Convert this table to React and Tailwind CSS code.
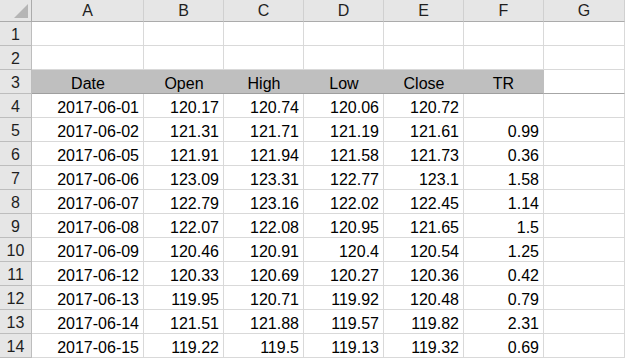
import React from "react";

const cols = ["A", "B", "C", "D", "E", "F", "G"];

const data = [
  ["2017-06-01", "120.17", "120.74", "120.06", "120.72", ""],
  ["2017-06-02", "121.31", "121.71", "121.19", "121.61", "0.99"],
  ["2017-06-05", "121.91", "121.94", "121.58", "121.73", "0.36"],
  ["2017-06-06", "123.09", "123.31", "122.77", "123.1", "1.58"],
  ["2017-06-07", "122.79", "123.16", "122.02", "122.45", "1.14"],
  ["2017-06-08", "122.07", "122.08", "120.95", "121.65", "1.5"],
  ["2017-06-09", "120.46", "120.91", "120.4", "120.54", "1.25"],
  ["2017-06-12", "120.33", "120.69", "120.27", "120.36", "0.42"],
  ["2017-06-13", "119.95", "120.71", "119.92", "120.48", "0.79"],
  ["2017-06-14", "121.51", "121.88", "119.57", "119.82", "2.31"],
  ["2017-06-15", "119.22", "119.5", "119.13", "119.32", "0.69"],
];

const headers = ["Date", "Open", "High", "Low", "Close", "TR"];

const RowHead = ({ n }) => (
  <div className="bg-[#e6e6e6] border-r border-b border-[#bdbdbd] flex items-center justify-center text-[#1f1f1f] pt-[2px]">
    {n}
  </div>
);

export default function App() {
  return (
    <div
      className="w-[625px] h-[359px] overflow-hidden bg-white text-[16px] text-black"
      style={{ fontFamily: "'Liberation Sans', Arial, sans-serif" }}
    >
      <div className="grid grid-cols-[32px_112px_80px_80px_80px_80px_80px_1fr] grid-rows-[22px_repeat(14,24px)]">
        {/* column headers */}
        <div className="bg-[#e6e6e6] border-r border-b border-[#ababab] flex items-end justify-end p-[3px]">
          <svg width="14" height="14" viewBox="0 0 14 14">
            <polygon points="14,0 14,14 0,14" fill="#b5b5b5" />
          </svg>
        </div>
        {cols.map((c) => (
          <div
            key={c}
            className="bg-[#e6e6e6] border-r border-[#d0d0d0] border-b border-b-[#ababab] flex items-center justify-center text-[#1f1f1f] pt-[1px]"
          >
            {c}
          </div>
        ))}

        {/* rows 1-2 */}
        {[1, 2].map((r) => (
          <React.Fragment key={r}>
            <RowHead n={r} />
            {cols.map((c) => (
              <div key={c} className="border-r border-b border-[#d9d9d9]" />
            ))}
          </React.Fragment>
        ))}

        {/* row 3 headers */}
        <RowHead n={3} />
        {headers.map((h, i) => (
          <div
            key={h}
            className={`bg-[#bfbfbf] border-b border-[#9f9f9f] flex items-center justify-center pt-[4px] ${i === 5 ? "border-r border-r-[#bfbfbf]" : ""}`}
          >
            {h}
          </div>
        ))}
        <div className="border-r border-b border-[#d9d9d9] border-b-[#a6a6a6]" />

        {/* data */}
        {data.map((row, r) => (
          <React.Fragment key={r}>
            <RowHead n={r + 4} />
            {row.map((v, i) => (
              <div
                key={i}
                className="border-r border-b border-[#d9d9d9] flex items-center justify-end pr-[4px] pt-[4px]"
              >
                {v}
              </div>
            ))}
            <div className="border-r border-b border-[#d9d9d9]" />
          </React.Fragment>
        ))}
      </div>
    </div>
  );
}
